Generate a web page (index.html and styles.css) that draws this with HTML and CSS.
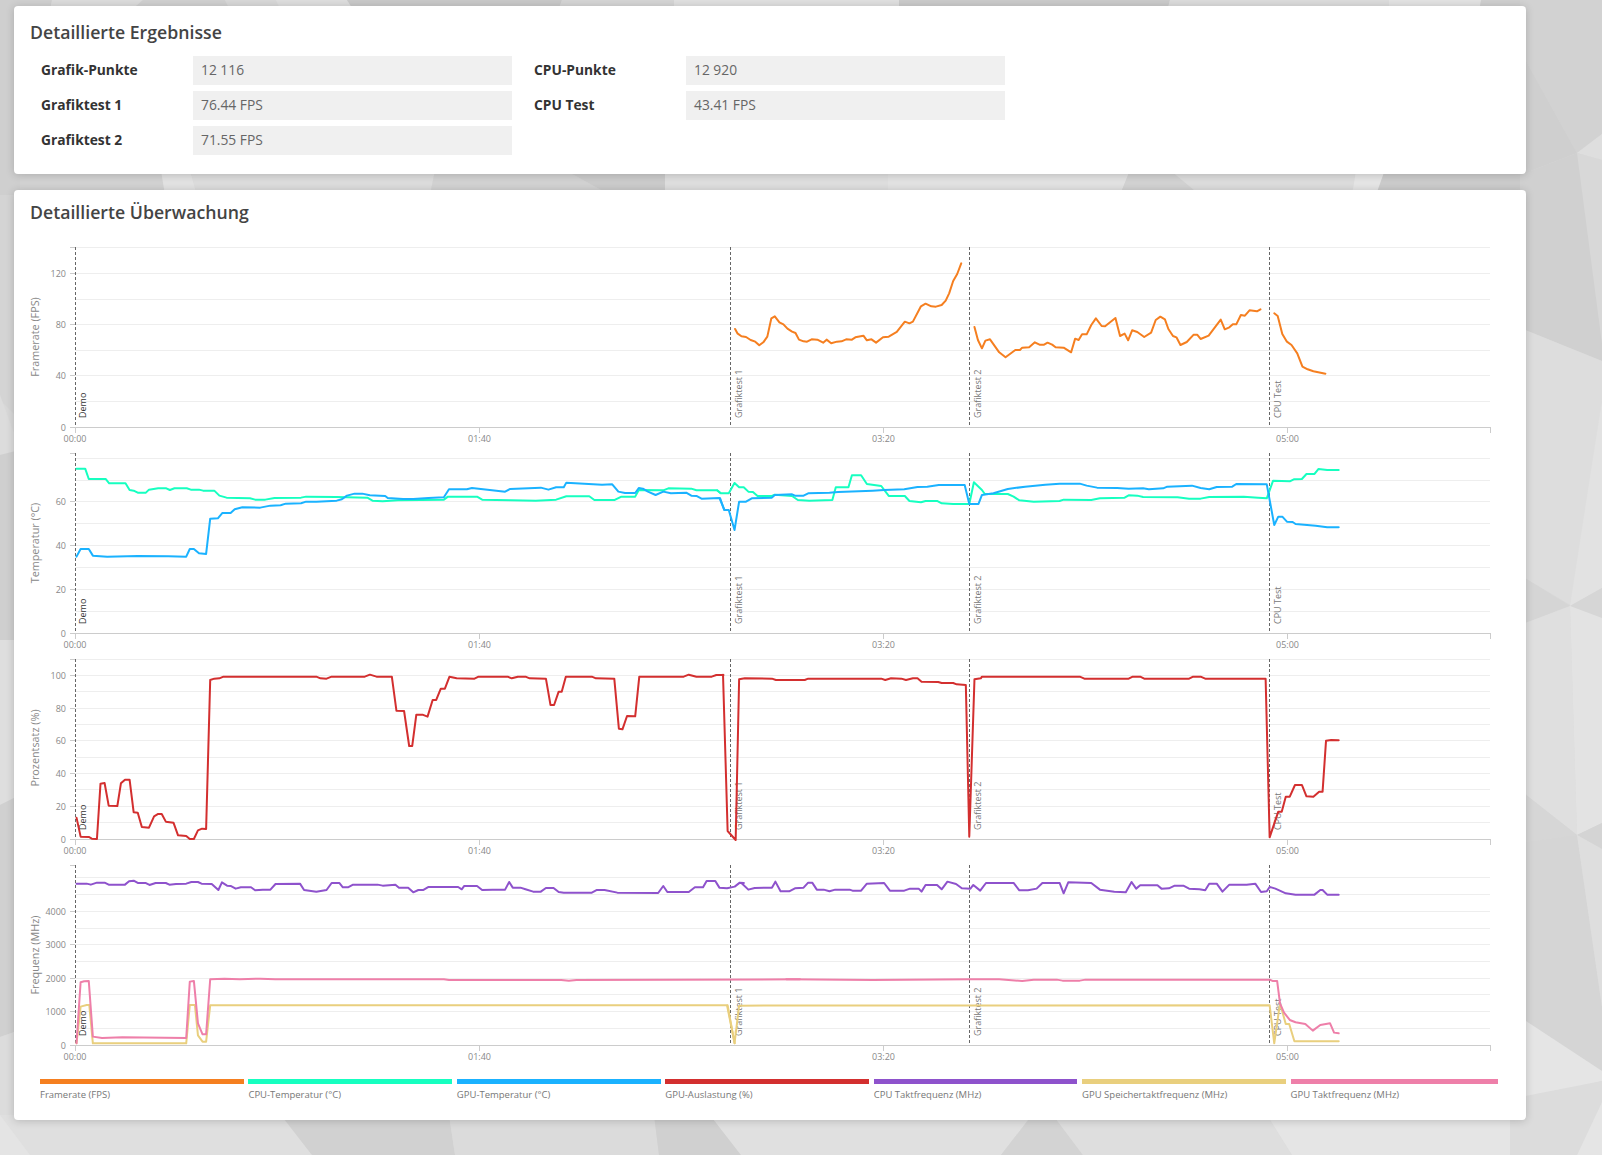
FILE: index.html
```html
<!DOCTYPE html>
<html lang="de">
<head>
<meta charset="utf-8">
<title>Detaillierte Ergebnisse</title>
<link rel="stylesheet" href="styles.css">
</head>
<body>
<svg class="backdrop" viewBox="0 0 1602 1155" preserveAspectRatio="none" aria-hidden="true">
  <rect width="1602" height="1155" fill="#d8d8d8"/>
  <!-- top strip -->
  <polygon fill="#d0d0d0" points="0,0 52,0 48,20 0,20"/>
  <polygon fill="#dcdcdc" points="52,0 143,0 120,20 48,20"/>
  <polygon fill="#d0d0d0" points="143,0 225,0 235,20 120,20"/>
  <polygon fill="#d8d8d8" points="225,0 276,0 285,20 235,20"/>
  <polygon fill="#dedede" points="276,0 347,0 360,20 285,20"/>
  <polygon fill="#c9c9c9" points="347,0 562,0 555,20 360,20"/>
  <polygon fill="#d5d5d5" points="562,0 674,0 674,20 555,20"/>
  <polygon fill="#e0e0e0" points="674,0 899,0 899,20 674,20"/>
  <polygon fill="#cbcbcb" points="899,0 1170,0 1165,20 899,20"/>
  <polygon fill="#dcdcdc" points="1170,0 1389,0 1389,20 1165,20"/>
  <polygon fill="#e3e3e3" points="1389,0 1481,0 1478,20 1389,20"/>
  <polygon fill="#cfcfcf" points="1481,0 1530,0 1530,20 1478,20"/>
  <!-- gutter between panels -->
  <polygon fill="#d2d2d2" points="0,170 161,170 165,195 0,195"/>
  <polygon fill="#e2e2e2" points="161,170 190,170 197,195 165,195"/>
  <polygon fill="#dcdcdc" points="190,170 435,170 430,195 197,195"/>
  <polygon fill="#d2d2d2" points="435,170 565,170 610,195 430,195"/>
  <polygon fill="#cbcbcb" points="565,170 665,170 665,195 610,195"/>
  <polygon fill="#dedede" points="665,170 888,170 888,195 665,195"/>
  <polygon fill="#e2e2e2" points="888,170 1130,170 1120,195 888,195"/>
  <polygon fill="#d2d2d2" points="1130,170 1170,170 1200,195 1120,195"/>
  <polygon fill="#dcdcdc" points="1170,170 1356,170 1352,195 1200,195"/>
  <polygon fill="#e5e5e5" points="1356,170 1385,170 1376,195 1352,195"/>
  <polygon fill="#cbcbcb" points="1385,170 1530,170 1530,195 1376,195"/>
  <!-- left strip -->
  <polygon fill="#cfcfcf" points="0,0 20,0 20,400 0,400"/>
  <polygon fill="#d4d4d4" points="0,195 20,195 20,420 0,400"/>
  <polygon fill="#dcdcdc" points="0,395 20,450 0,455"/>
  <polygon fill="#cfcfcf" points="0,455 20,450 20,640 0,640"/>
  <polygon fill="#dedede" points="0,640 20,640 20,795 0,805"/>
  <polygon fill="#d0d0d0" points="0,805 20,795 20,1030 0,1037"/>
  <polygon fill="#dcdcdc" points="0,1037 20,1030 20,1155 0,1155"/>
  <!-- right strip -->
  <polygon fill="#d2d2d2" points="1520,0 1602,0 1602,134 1577,153 1520,50"/>
  <polygon fill="#cfcfcf" points="1520,50 1577,153 1520,175"/>
  <polygon fill="#dedede" points="1577,153 1602,134 1602,160"/>
  <polygon fill="#d8d8d8" points="1577,153 1602,160 1602,344"/>
  <polygon fill="#d0d0d0" points="1520,175 1577,153 1602,344 1602,361 1520,328"/>
  <polygon fill="#dddddd" points="1520,328 1602,361 1602,400 1572,606 1520,575"/>
  <polygon fill="#e2e2e2" points="1602,400 1602,588 1570,606"/>
  <polygon fill="#d5d5d5" points="1520,575 1570,606 1520,625"/>
  <polygon fill="#d6d6d6" points="1570,606 1602,588 1602,618"/>
  <polygon fill="#dfdfdf" points="1520,625 1570,606 1577,835 1520,790"/>
  <polygon fill="#e3e3e3" points="1570,606 1602,618 1602,823 1577,835"/>
  <polygon fill="#d6d6d6" points="1520,790 1577,835 1520,843"/>
  <polygon fill="#d4d4d4" points="1577,835 1602,823 1602,849"/>
  <polygon fill="#d5d5d5" points="1520,843 1577,835 1602,1007 1602,1071 1520,1017"/>
  <polygon fill="#dedede" points="1577,835 1602,849 1602,1007"/>
  <polygon fill="#e5e5e5" points="1520,1017 1602,1071 1602,1081 1520,1101"/>
  <polygon fill="#dcdcdc" points="1500,1101 1602,1081 1602,1102 1577,1155 1500,1155"/>
  <polygon fill="#e5e5e5" points="1602,1102 1602,1155 1577,1155"/>
  <!-- bottom strip -->
  <polygon fill="#dfdfdf" points="0,1115 281,1115 312,1155 0,1155"/>
  <polygon fill="#e4e4e4" points="0,1115 30,1155 0,1155"/>
  <polygon fill="#d1d1d1" points="281,1115 449,1115 455,1155 312,1155"/>
  <polygon fill="#dbdbdb" points="449,1115 654,1115 659,1155 455,1155"/>
  <polygon fill="#d0d0d0" points="654,1115 710,1115 741,1155 659,1155"/>
  <polygon fill="#e0e0e0" points="710,1115 1032,1115 1001,1155 741,1155"/>
  <polygon fill="#d3d3d3" points="1032,1115 1053,1115 1083,1155 1001,1155"/>
  <polygon fill="#dedede" points="1053,1115 1267,1115 1292,1155 1083,1155"/>
  <polygon fill="#e5e5e5" points="1267,1115 1510,1115 1510,1155 1292,1155"/>
</svg>

<main class="page">
  <section class="panel panel-results">
    <h2 class="panel-title">Detaillierte Ergebnisse</h2>
    <div class="results">
      <dl class="result-col">
        <dt>Grafik-Punkte</dt><dd>12 116</dd>
        <dt>Grafiktest 1</dt><dd>76.44 FPS</dd>
        <dt>Grafiktest 2</dt><dd>71.55 FPS</dd>
      </dl>
      <dl class="result-col">
        <dt>CPU-Punkte</dt><dd>12 920</dd>
        <dt>CPU Test</dt><dd>43.41 FPS</dd>
      </dl>
    </div>
  </section>

  <section class="panel panel-monitor">
    <h2 class="panel-title">Detaillierte Überwachung</h2>

    <!-- Framerate -->
    <svg class="chart" viewBox="14 240 1512 206">
      <g class="grid">
        <line x1="75" x2="1490" y1="247.5" y2="247.5"/><line x1="75" x2="1490" y1="273.5" y2="273.5"/><line x1="75" x2="1490" y1="299.5" y2="299.5"/><line x1="75" x2="1490" y1="324.5" y2="324.5"/><line x1="75" x2="1490" y1="350.5" y2="350.5"/><line x1="75" x2="1490" y1="375.5" y2="375.5"/><line x1="75" x2="1490" y1="401.5" y2="401.5"/>
      </g>
      <g class="axis">
        <line x1="75" x2="1490" y1="427.5" y2="427.5"/>
        <line x1="70" x2="75" y1="247.5" y2="247.5"/><line x1="70" x2="75" y1="273.5" y2="273.5"/><line x1="70" x2="75" y1="324.5" y2="324.5"/><line x1="70" x2="75" y1="375.5" y2="375.5"/><line x1="70" x2="75" y1="427.5" y2="427.5"/>
        <line x1="75.5" x2="75.5" y1="427" y2="433"/><line x1="479.5" x2="479.5" y1="427" y2="433"/><line x1="883.5" x2="883.5" y1="427" y2="433"/><line x1="1287.5" x2="1287.5" y1="427" y2="433"/><line x1="1490.5" x2="1490.5" y1="427" y2="433"/>
      </g>
      <g class="tick tick-y">
        <text x="66" y="276.5">120</text><text x="66" y="327.5">80</text><text x="66" y="378.5">40</text><text x="66" y="430.5">0</text>
      </g>
      <g class="tick tick-x">
        <text x="75" y="442">00:00</text><text x="479.5" y="442">01:40</text><text x="883.5" y="442">03:20</text><text x="1287.5" y="442">05:00</text>
      </g>
      <text class="axis-title" transform="translate(39 337) rotate(-90)">Framerate (FPS)</text>
      <g class="marker">
        <line x1="75.5" x2="75.5" y1="247" y2="427"/><line x1="730.5" x2="730.5" y1="247" y2="427"/><line x1="969.5" x2="969.5" y1="247" y2="427"/><line x1="1269.5" x2="1269.5" y1="247" y2="427"/>
      </g>
      <text class="marker-label marker-first" transform="translate(86 418) rotate(-90)">Demo</text>
      <text class="marker-label" transform="translate(742 418) rotate(-90)">Grafiktest 1</text>
      <text class="marker-label" transform="translate(981 418) rotate(-90)">Grafiktest 2</text>
      <text class="marker-label" transform="translate(1281 418) rotate(-90)">CPU Test</text>
      <g class="series s-fps" transform="translate(700 230) scale(.5754 .3333)">
        <polyline points="61,297 65,310 72,319 80,321 88,330 96,335 103,346 110,337 117,320 124,265 130,259 138,277 145,283 152,296 160,305 166,309 172,329 180,334 186,335 194,328 204,329 214,338 220,329 228,340 238,335 246,334 254,328 264,329 270,322 284,317 290,331 298,328 306,338 318,322 328,320 342,306 356,275 364,280 370,275 384,229 392,221 402,229 410,230 420,225 427,212 433,190 440,153 447,132 454,100"/>
        <polyline points="477,291 483,330 490,355 496,332 504,328 520,367 531,382 548,360 556,360 560,353 572,352 582,337 590,344 598,344 604,338 612,344 618,352 632,353 645,367 652,326 658,330 664,313 672,313 680,285 688,265 698,288 704,289 722,264 730,318 738,311 744,331 751,301 760,306 772,321 784,308 792,270 800,260 808,268 814,297 822,318 828,322 835,345 846,336 858,314 864,314 870,327 884,317 905,269 912,298 920,292 926,283 932,283 940,255 947,257 955,241 968,244 974,238"/>
        <polyline points="998,250 1004,258 1012,312 1020,335 1028,345 1038,370 1047,410 1056,418 1066,424 1087,431"/>
      </g>
    </svg>

    <!-- Temperatur -->
    <svg class="chart" viewBox="14 446 1512 206">
      <g class="grid">
        <line x1="75" x2="1490" y1="458.5" y2="458.5"/><line x1="75" x2="1490" y1="480.5" y2="480.5"/><line x1="75" x2="1490" y1="501.5" y2="501.5"/><line x1="75" x2="1490" y1="523.5" y2="523.5"/><line x1="75" x2="1490" y1="545.5" y2="545.5"/><line x1="75" x2="1490" y1="567.5" y2="567.5"/><line x1="75" x2="1490" y1="589.5" y2="589.5"/><line x1="75" x2="1490" y1="611.5" y2="611.5"/>
      </g>
      <g class="axis">
        <line x1="75" x2="1490" y1="633.5" y2="633.5"/>
        <line x1="70" x2="75" y1="453.5" y2="453.5"/><line x1="70" x2="75" y1="501.5" y2="501.5"/><line x1="70" x2="75" y1="545.5" y2="545.5"/><line x1="70" x2="75" y1="589.5" y2="589.5"/><line x1="70" x2="75" y1="633.5" y2="633.5"/>
        <line x1="75.5" x2="75.5" y1="633" y2="639"/><line x1="479.5" x2="479.5" y1="633" y2="639"/><line x1="883.5" x2="883.5" y1="633" y2="639"/><line x1="1287.5" x2="1287.5" y1="633" y2="639"/><line x1="1490.5" x2="1490.5" y1="633" y2="639"/>
      </g>
      <g class="tick tick-y">
        <text x="66" y="504.5">60</text><text x="66" y="548.5">40</text><text x="66" y="592.5">20</text><text x="66" y="636.5">0</text>
      </g>
      <g class="tick tick-x">
        <text x="75" y="648">00:00</text><text x="479.5" y="648">01:40</text><text x="883.5" y="648">03:20</text><text x="1287.5" y="648">05:00</text>
      </g>
      <text class="axis-title" transform="translate(39 543) rotate(-90)">Temperatur (°C)</text>
      <g class="marker">
        <line x1="75.5" x2="75.5" y1="453" y2="633"/><line x1="730.5" x2="730.5" y1="453" y2="633"/><line x1="969.5" x2="969.5" y1="453" y2="633"/><line x1="1269.5" x2="1269.5" y1="453" y2="633"/>
      </g>
      <text class="marker-label marker-first" transform="translate(86 624) rotate(-90)">Demo</text>
      <text class="marker-label" transform="translate(742 624) rotate(-90)">Grafiktest 1</text>
      <text class="marker-label" transform="translate(981 624) rotate(-90)">Grafiktest 2</text>
      <text class="marker-label" transform="translate(1281 624) rotate(-90)">CPU Test</text>
      <g class="series s-cpu-temp">
        <g transform="translate(0 230) scale(.5102 .3333)"><polyline points="150,716 167,716 174,747 207,747 214,760 246,760 254,780 262,782 270,788 286,788 292,779 310,775 326,775 333,780 342,775 366,775 374,779 390,779 398,782 420,782 430,797 444,803 466,804 490,805 500,809 520,809 538,804 590,803 600,800 660,801 720,803 730,812 750,814 780,811 870,809 878,800 935,800 945,809 1000,811 1050,812 1090,809 1110,799 1155,799 1165,810 1205,810 1218,800 1245,800 1252,780 1300,781 1310,775 1355,776 1365,781 1405,781 1412,789"/></g>
        <g transform="translate(700 230) scale(.5754 .3333)"><polyline points="30,781 36,790 50,790 60,759 68,772 76,772 84,785 92,786 100,798 125,798 130,794 160,798 170,810 190,812 230,810 236,772 258,772 264,736 280,736 290,762 315,768 328,798 356,798 364,813 384,817 392,813 412,813 420,820 440,822 468,822 476,757 490,780 495,792 535,792 545,800 555,811 580,815 625,813 632,809 680,810 695,805 738,803 745,796 760,797 770,801 830,802 850,806 870,806 885,801 945,800 970,803 985,805 996,752 1025,754 1032,748 1046,747 1054,732 1068,732 1075,717 1090,720 1110,720"/></g>
      </g>
      <g class="series s-gpu-temp">
        <g transform="translate(0 230) scale(.5102 .3333)"><polyline points="150,980 158,957 174,957 182,977 210,980 270,978 330,979 365,980 372,957 380,957 390,970 404,972 412,866 427,865 436,849 452,849 460,838 475,832 510,833 530,827 550,826 560,821 590,820 600,815 620,815 660,812 670,808 680,797 695,791 710,791 725,796 755,798 760,804 790,807 810,807 840,804 870,802 880,778 915,778 925,774 960,780 990,785 1000,777 1060,773 1075,779 1090,772 1105,772 1110,758 1180,764 1200,763 1212,785 1225,789 1245,789 1252,774 1260,776 1270,785 1285,795 1300,785 1315,790 1345,788 1355,797 1365,798 1375,806 1410,804 1420,840"/></g>
        <g transform="translate(700 230) scale(.5754 .3333)"><polyline points="35,805 42,840 50,840 60,900 68,815 80,815 90,805 125,803 130,795 160,793 165,797 180,797 188,790 225,788 240,786 300,782 320,780 355,778 378,771 395,770 415,765 460,765 468,822 484,822 490,795 510,790 535,777 565,770 600,764 625,761 660,761 672,767 690,773 725,774 745,776 770,775 780,778 805,775 812,770 855,767 870,774 885,778 898,771 925,770 932,762 985,763 998,885 1005,860 1012,860 1020,875 1030,876 1035,882 1050,884 1070,887 1090,892 1110,892"/></g>
      </g>
    </svg>

    <!-- Prozentsatz -->
    <svg class="chart" viewBox="14 652 1512 206">
      <g class="grid">
        <line x1="75" x2="1490" y1="659.5" y2="659.5"/><line x1="75" x2="1490" y1="675.5" y2="675.5"/><line x1="75" x2="1490" y1="691.5" y2="691.5"/><line x1="75" x2="1490" y1="708.5" y2="708.5"/><line x1="75" x2="1490" y1="724.5" y2="724.5"/><line x1="75" x2="1490" y1="740.5" y2="740.5"/><line x1="75" x2="1490" y1="757.5" y2="757.5"/><line x1="75" x2="1490" y1="773.5" y2="773.5"/><line x1="75" x2="1490" y1="789.5" y2="789.5"/><line x1="75" x2="1490" y1="806.5" y2="806.5"/><line x1="75" x2="1490" y1="822.5" y2="822.5"/>
      </g>
      <g class="axis">
        <line x1="75" x2="1490" y1="839.5" y2="839.5"/>
        <line x1="70" x2="75" y1="659.5" y2="659.5"/><line x1="70" x2="75" y1="675.5" y2="675.5"/><line x1="70" x2="75" y1="708.5" y2="708.5"/><line x1="70" x2="75" y1="740.5" y2="740.5"/><line x1="70" x2="75" y1="773.5" y2="773.5"/><line x1="70" x2="75" y1="806.5" y2="806.5"/><line x1="70" x2="75" y1="839.5" y2="839.5"/>
        <line x1="75.5" x2="75.5" y1="839" y2="845"/><line x1="479.5" x2="479.5" y1="839" y2="845"/><line x1="883.5" x2="883.5" y1="839" y2="845"/><line x1="1287.5" x2="1287.5" y1="839" y2="845"/><line x1="1490.5" x2="1490.5" y1="839" y2="845"/>
      </g>
      <g class="tick tick-y">
        <text x="66" y="678.5">100</text><text x="66" y="711.5">80</text><text x="66" y="743.5">60</text><text x="66" y="776.5">40</text><text x="66" y="809.5">20</text><text x="66" y="842.5">0</text>
      </g>
      <g class="tick tick-x">
        <text x="75" y="854">00:00</text><text x="479.5" y="854">01:40</text><text x="883.5" y="854">03:20</text><text x="1287.5" y="854">05:00</text>
      </g>
      <text class="axis-title" transform="translate(39 748) rotate(-90)">Prozentsatz (%)</text>
      <g class="marker">
        <line x1="75.5" x2="75.5" y1="659" y2="839"/><line x1="730.5" x2="730.5" y1="659" y2="839"/><line x1="969.5" x2="969.5" y1="659" y2="839"/><line x1="1269.5" x2="1269.5" y1="659" y2="839"/>
      </g>
      <text class="marker-label marker-first" transform="translate(86 830) rotate(-90)">Demo</text>
      <text class="marker-label" transform="translate(742 830) rotate(-90)">Grafiktest 1</text>
      <text class="marker-label" transform="translate(981 830) rotate(-90)">Grafiktest 2</text>
      <text class="marker-label" transform="translate(1281 830) rotate(-90)">CPU Test</text>
      <g class="series s-gpu-load">
        <g transform="translate(0 640) scale(.5102 .3333)"><polyline points="150,533 158,590 174,591 180,596 190,597 197,431 205,429 213,497 230,498 237,430 245,419 254,419 262,517 270,518 278,561 292,563 302,529 310,522 317,522 325,545 340,548 349,586 365,588 372,597 380,597 388,571 396,566 404,567 412,120 420,116 430,115 438,110 620,110 628,115 640,116 650,110 715,110 725,104 738,110 768,110 777,212 792,213 802,318 808,318 816,224 828,224 838,230 848,180 855,180 864,146 872,146 881,110 895,115 930,116 938,110 995,110 1003,115 1015,110 1030,110 1038,115 1070,116 1079,195 1086,195 1095,155 1101,155 1109,110 1160,110 1168,115 1204,116 1213,266 1220,268 1229,228 1245,229 1253,110 1340,110 1350,104 1365,110 1395,110 1404,105 1418,105"/></g>
        <g transform="translate(700 640) scale(.5754 .3333)"><polyline points="40,104 48,573 62,600 68,118 78,115 125,116 132,120 182,120 188,116 315,116 322,120 332,115 350,116 358,120 370,115 378,115 385,125 414,126 420,129 440,129 446,133 462,135 468,590 477,118 488,115 490,110 660,110 668,116 745,116 752,110 765,110 772,116 850,116 857,110 870,110 878,116 983,116 990,592 1005,515 1011,515 1018,470 1025,470 1034,435 1046,435 1054,469 1066,470 1076,455 1082,455 1088,302 1097,300 1110,301"/></g>
      </g>
    </svg>

    <!-- Frequenz -->
    <svg class="chart" viewBox="14 858 1512 206">
      <g class="grid">
        <line x1="75" x2="1490" y1="877.5" y2="877.5"/><line x1="75" x2="1490" y1="894.5" y2="894.5"/><line x1="75" x2="1490" y1="911.5" y2="911.5"/><line x1="75" x2="1490" y1="928.5" y2="928.5"/><line x1="75" x2="1490" y1="944.5" y2="944.5"/><line x1="75" x2="1490" y1="961.5" y2="961.5"/><line x1="75" x2="1490" y1="978.5" y2="978.5"/><line x1="75" x2="1490" y1="994.5" y2="994.5"/><line x1="75" x2="1490" y1="1011.5" y2="1011.5"/><line x1="75" x2="1490" y1="1028.5" y2="1028.5"/>
      </g>
      <g class="axis">
        <line x1="75" x2="1490" y1="1045.5" y2="1045.5"/>
        <line x1="70" x2="75" y1="865.5" y2="865.5"/><line x1="70" x2="75" y1="911.5" y2="911.5"/><line x1="70" x2="75" y1="944.5" y2="944.5"/><line x1="70" x2="75" y1="978.5" y2="978.5"/><line x1="70" x2="75" y1="1011.5" y2="1011.5"/><line x1="70" x2="75" y1="1045.5" y2="1045.5"/>
        <line x1="75.5" x2="75.5" y1="1045" y2="1051"/><line x1="479.5" x2="479.5" y1="1045" y2="1051"/><line x1="883.5" x2="883.5" y1="1045" y2="1051"/><line x1="1287.5" x2="1287.5" y1="1045" y2="1051"/><line x1="1490.5" x2="1490.5" y1="1045" y2="1051"/>
      </g>
      <g class="tick tick-y">
        <text x="66" y="914.5">4000</text><text x="66" y="947.5">3000</text><text x="66" y="981.5">2000</text><text x="66" y="1014.5">1000</text><text x="66" y="1048.5">0</text>
      </g>
      <g class="tick tick-x">
        <text x="75" y="1060">00:00</text><text x="479.5" y="1060">01:40</text><text x="883.5" y="1060">03:20</text><text x="1287.5" y="1060">05:00</text>
      </g>
      <text class="axis-title" transform="translate(39 955) rotate(-90)">Frequenz (MHz)</text>
      <g class="marker">
        <line x1="75.5" x2="75.5" y1="865" y2="1045"/><line x1="730.5" x2="730.5" y1="865" y2="1045"/><line x1="969.5" x2="969.5" y1="865" y2="1045"/><line x1="1269.5" x2="1269.5" y1="865" y2="1045"/>
      </g>
      <text class="marker-label marker-first" transform="translate(86 1036) rotate(-90)">Demo</text>
      <text class="marker-label" transform="translate(742 1036) rotate(-90)">Grafiktest 1</text>
      <text class="marker-label" transform="translate(981 1036) rotate(-90)">Grafiktest 2</text>
      <text class="marker-label" transform="translate(1281 1036) rotate(-90)">CPU Test</text>
      <g class="series s-cpu-clock">
        <g transform="translate(0 640) scale(.5102 .3333)"><polyline points="150,731 170,731 178,734 190,728 205,728 213,734 245,734 253,724 262,722 270,729 285,729 293,735 305,729 325,729 332,734 345,732 365,731 375,726 388,726 395,731 415,732 428,750 435,727 445,737 452,738 462,746 472,742 492,742 500,751 515,749 530,749 540,732 588,731 596,750 620,755 640,750 650,729 665,729 672,742 682,742 692,734 740,734 750,737 775,734 782,743 800,743 810,757 820,750 830,750 840,741 898,741 905,748 910,738 935,738 945,750 965,749 990,749 998,726 1005,743 1020,743 1030,748 1045,755 1060,755 1070,744 1085,744 1095,756 1105,758 1160,758 1170,750 1185,750 1210,758 1290,759 1300,738 1308,756 1350,756 1362,742 1378,742 1385,723 1402,723 1410,743 1425,745 1440,740 1450,728 1458,729"/></g>
        <g transform="translate(700 640) scale(.5754 .3333)"><polyline points="72,729 84,749 95,744 125,743 131,725 140,754 155,754 165,745 180,743 188,728 195,728 203,749 215,749 225,754 235,749 260,749 265,752 280,752 290,731 320,729 330,752 355,752 365,746 380,746 385,755 392,735 412,735 420,748 430,725 445,732 455,745 470,746 475,735 487,752 497,729 545,729 555,751 570,751 585,746 595,729 625,729 632,760 640,727 680,729 695,749 720,755 740,757 750,726 758,746 765,736 795,736 802,746 815,745 825,737 840,737 850,746 868,748 878,751 885,731 898,731 908,755 920,734 950,734 965,731 975,756 985,754 990,741 1000,746 1018,760 1035,764 1068,764 1078,750 1082,750 1090,764 1110,764"/></g>
      </g>
      <g class="series s-mem-clock">
        <g transform="translate(0 640) scale(.5102 .3333)"><polyline points="150,1210 158,1100 170,1095 175,1095 182,1210 365,1210 372,1095 382,1095 388,1186 397,1205 404,1205 412,1096 425,1096 1425,1096 1440,1210"/></g>
        <g transform="translate(700 640) scale(.5754 .3333)"><polyline points="48,1096 60,1210 68,1097 990,1096 998,1210 1008,1090 1018,1152 1024,1152 1033,1204 1110,1204"/></g>
      </g>
      <g class="series s-gpu-clock">
        <g transform="translate(0 640) scale(.5102 .3333)"><polyline points="150,1210 158,1027 165,1024 174,1023 182,1190 200,1194 240,1192 365,1194 372,1025 380,1023 388,1150 397,1183 404,1183 412,1018 440,1016 470,1018 510,1016 540,1018 870,1018 880,1020 1100,1020 1115,1022 1130,1020 1568,1018"/></g>
        <g transform="translate(700 640) scale(.5754 .3333)"><polyline points="150,1018 300,1020 470,1018 520,1018 560,1023 580,1019 620,1019 630,1022 660,1022 670,1019 990,1019 995,1023 1003,1023 1008,1090 1015,1118 1025,1140 1035,1147 1052,1152 1065,1172 1078,1155 1095,1150 1102,1178 1110,1180"/></g>
      </g>
    </svg>

    <ul class="legend">
      <li class="legend-item"><span class="swatch swatch-fps"></span>Framerate (FPS)</li>
      <li class="legend-item"><span class="swatch swatch-cpu-temp"></span>CPU-Temperatur (°C)</li>
      <li class="legend-item"><span class="swatch swatch-gpu-temp"></span>GPU-Temperatur (°C)</li>
      <li class="legend-item"><span class="swatch swatch-gpu-load"></span>GPU-Auslastung (%)</li>
      <li class="legend-item"><span class="swatch swatch-cpu-clock"></span>CPU Taktfrequenz (MHz)</li>
      <li class="legend-item"><span class="swatch swatch-mem-clock"></span>GPU Speichertaktfrequenz (MHz)</li>
      <li class="legend-item"><span class="swatch swatch-gpu-clock"></span>GPU Taktfrequenz (MHz)</li>
    </ul>
  </section>
</main>
</body>
</html>
```

FILE: styles.css
```css
* { box-sizing: border-box; }

html, body {
  margin: 0;
  height: 1155px;
  overflow: hidden;
}

body {
  position: relative;
  font-family: "Open Sans", "Liberation Sans", sans-serif;
  color: #444;
}

.backdrop {
  position: absolute;
  inset: 0;
  width: 1602px;
  height: 1155px;
  display: block;
}

.page {
  position: relative;
  width: 1526px;
  margin-left: 14px;
  padding-top: 6px;
  display: flex;
  flex-direction: column;
  gap: 16px;
}

.panel {
  background: #fff;
  border-radius: 4px;
  box-shadow: 0 1px 9px rgba(0, 0, 0, .18);
  width: 1512px;
}

.panel-results {
  height: 168px;
  padding: 14px 16px 0;
}

.panel-monitor {
  height: 930px;
  padding-top: 10px;
}

.panel-title {
  margin: 0;
  padding: 0;
  font-size: 17.7px;
  line-height: 24px;
  font-weight: 600;
  color: #444;
}

.panel-monitor .panel-title {
  padding-left: 16px;
  margin-bottom: 16px;
}

.results {
  display: flex;
  gap: 22px;
  margin: 12px 0 0 11px;
}

.result-col {
  margin: 0;
  display: grid;
  grid-template-columns: 152px 319px;
  grid-auto-rows: 29px;
  row-gap: 6px;
  align-items: center;
}

.result-col dt {
  font-size: 13.8px;
  font-weight: 700;
  color: #333;
  padding-bottom: 2px;
}

.result-col dd {
  margin: 0;
  height: 29px;
  line-height: 27px;
  padding-left: 8px;
  font-size: 13.8px;
  color: #666;
  background: #f0f0f0;
}

.chart {
  display: block;
  width: 1512px;
  height: 206px;
}

.grid line {
  stroke: #eeeeee;
  stroke-width: 1;
}

.axis line {
  stroke: #cccccc;
  stroke-width: 1;
}

.tick text {
  font-size: 9px;
  fill: #888;
}

.tick-y text { text-anchor: end; }
.tick-x text { text-anchor: middle; }

.axis-title {
  font-size: 10.8px;
  fill: #888;
  text-anchor: middle;
}

.marker line {
  stroke: #666;
  stroke-width: 1;
  stroke-dasharray: 3 2;
}

.marker-label {
  font-size: 9px;
  fill: #777;
}

.marker-first { fill: #333; }

.series polyline {
  fill: none;
  stroke-width: 2px;
  stroke-linejoin: round;
  stroke-linecap: round;
  vector-effect: non-scaling-stroke;
}

.s-fps polyline { stroke: #f57f20; }
.s-cpu-temp polyline { stroke: #16ffc0; }
.s-gpu-temp polyline { stroke: #1ab2ff; }
.s-gpu-load polyline { stroke: #d32f2f; }
.s-cpu-clock polyline { stroke: #8e52cc; }
.s-mem-clock polyline { stroke: #e9cf7e; }
.s-gpu-clock polyline { stroke: #ee7fa9; }

.legend {
  list-style: none;
  margin: 15px 0 0 26px;
  padding: 0;
  width: 1459px;
  display: flex;
}

.legend-item {
  flex: 1 1 0;
  font-size: 9.5px;
  line-height: 13px;
  color: #777;
}

.swatch {
  display: block;
  height: 5px;
  margin: 0 4.7px 4px 0;
}

.legend-item:last-child .swatch { margin-right: 1px; }

.swatch-fps { background: #f57f20; }
.swatch-cpu-temp { background: #16ffc0; }
.swatch-gpu-temp { background: #1ab2ff; }
.swatch-gpu-load { background: #d32f2f; }
.swatch-cpu-clock { background: #8e52cc; }
.swatch-mem-clock { background: #e9cf7e; }
.swatch-gpu-clock { background: #ee7fa9; }
```
